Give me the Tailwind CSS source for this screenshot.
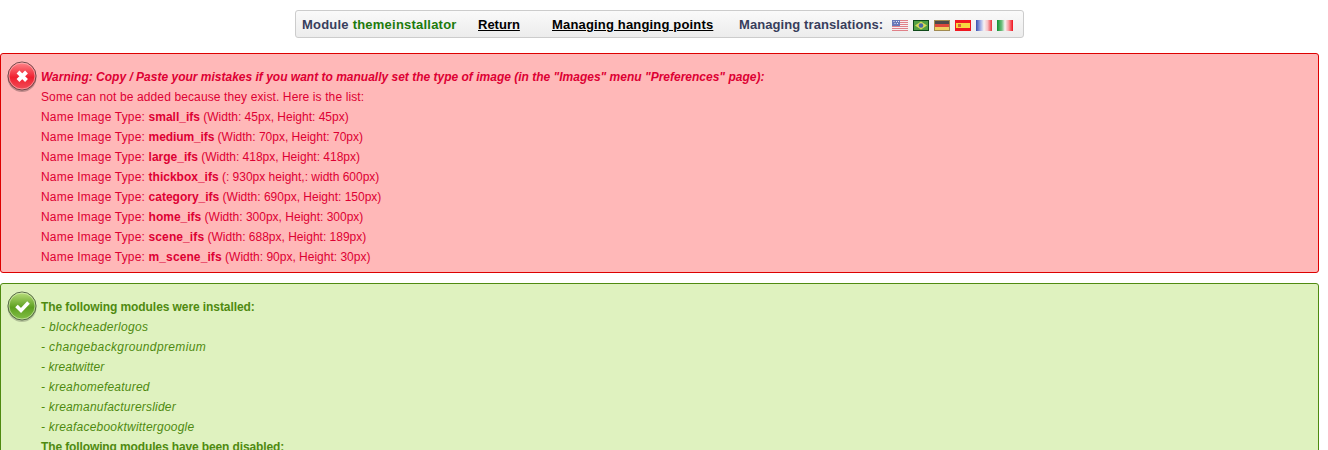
<!DOCTYPE html>
<html>
<head>
<meta charset="utf-8">
<script src="https://cdn.jsdelivr.net/npm/@tailwindcss/browser@4"></script>
</head>
<body class="bg-white">
<div class="h-[450px] w-[1328px] overflow-hidden font-['Liberation_Sans',Arial,sans-serif] text-[12px] leading-[20px]">
<div class="w-[1319px]">
  <div class="flex justify-center pt-[10px]">
    <div class="flex h-[28px] w-[729px] items-center rounded-[3px] border border-[#ccc] bg-gradient-to-b from-[#fafafa] to-[#ececec] pl-[6px] pt-[2px] text-[13px] font-bold text-[#383e5c]">
      <span class="w-[176px] tracking-[0.22px]">Module <span class="text-[#1c7a0c]">themeinstallator</span></span>
      <a class="w-[74px] text-black underline">Return</a>
      <a class="w-[187px] tracking-[0.17px] text-black underline">Managing hanging points</a>
      <span class="w-[153px] tracking-[0.09px]">Managing translations:</span>
      <span class="mt-[1px] flex gap-[5px]">
        <svg width="16" height="11" viewBox="0 0 16 11"><rect width="16" height="11" fill="#f6eef0"/><path d="M0 .5h16M0 2.5h16M0 4.5h16M0 6.5h16M0 8.5h16M0 10.5h16" stroke="#e08088"/><rect width="8" height="6" fill="#6a78b8"/><path d="M1.5 1.5h1M4 1.5h1M6 1.5h1M2.5 3.5h1M5 3.5h1" stroke="#e8e8f4"/></svg>
        <svg width="16" height="11" viewBox="0 0 16 11"><rect width="16" height="11" fill="#0f4a1a"/><rect x="1" y="1" width="14" height="9" fill="#52a044"/><path d="M8 1.5 14 5.5 8 9.5 2 5.5Z" fill="#d8d85a"/><circle cx="8" cy="5.5" r="2.3" fill="#4a6aa8"/></svg>
        <svg width="16" height="11" viewBox="0 0 16 11"><rect width="16" height="11" fill="#a08a50"/><rect x="1" y="1" width="14" height="3" fill="#4a4a4a"/><rect x="1" y="4" width="14" height="3" fill="#dc4a3c"/><rect x="1" y="7" width="14" height="3" fill="#f0d060"/></svg>
        <svg width="16" height="11" viewBox="0 0 16 11"><rect width="16" height="11" fill="#f01820"/><rect x="1" y="3" width="14" height="5" fill="#f8d840"/><rect x="3" y="4" width="3" height="3" fill="#d86a3c"/></svg>
        <svg width="16" height="11" viewBox="0 0 16 11"><defs><linearGradient id="fr"><stop offset="0" stop-color="#3a50b0"/><stop offset=".3" stop-color="#a8b4e8"/><stop offset=".5" stop-color="#f6f2f4"/><stop offset=".72" stop-color="#f8c0c4"/><stop offset="1" stop-color="#e83038"/></linearGradient></defs><rect width="16" height="11" fill="url(#fr)"/></svg>
        <svg width="16" height="11" viewBox="0 0 16 11"><defs><linearGradient id="it"><stop offset="0" stop-color="#109030"/><stop offset=".3" stop-color="#70c080"/><stop offset=".5" stop-color="#f8f6f6"/><stop offset=".72" stop-color="#f8a0a4"/><stop offset="1" stop-color="#f0101c"/></linearGradient></defs><rect width="16" height="11" fill="url(#it)"/></svg>
      </span>
    </div>
  </div>

  <div class="relative mt-[15px] h-[220px] rounded-[3px] border border-[#dd0000] bg-[#ffb8b8] pl-[40px] pt-[13px] text-[#dd0033]">
    <svg class="absolute left-[6px] top-[6px]" width="32" height="33" viewBox="0 0 32 33">
      <defs><linearGradient id="r" x1="0" y1="0" x2="0" y2="1"><stop offset="0" stop-color="#ff8a8e"/><stop offset=".55" stop-color="#f02030"/><stop offset="1" stop-color="#f0505a"/></linearGradient></defs>
      <ellipse cx="15" cy="17.5" rx="14.5" ry="14.5" fill="#000" fill-opacity=".25"/>
      <circle cx="15" cy="16" r="14" fill="url(#r)" stroke="#6b4a4c" stroke-width="1"/>
      <circle cx="15" cy="16" r="13" fill="none" stroke="#ffc8c8" stroke-opacity=".6" stroke-width="1"/>
      <path d="M11 12 19.5 20.5M19.5 12 11 20.5" stroke="#fff" stroke-width="4"/>
    </svg>
    <div class="font-bold italic">Warning: Copy / Paste your mistakes if you want to manually set the type of image (in the "Images" menu "Preferences" page):</div>
    <div class="tracking-[0.12px]">Some can not be added because they exist. Here is the list:</div>
    <div><span class="tracking-[0.18px]">Name Image Type: </span><b>small_ifs</b> (Width: 45px, Height: 45px)</div>
    <div><span class="tracking-[0.18px]">Name Image Type: </span><b class="tracking-[-0.1px]">medium_ifs</b> (Width: 70px, Height: 70px)</div>
    <div><span class="tracking-[0.18px]">Name Image Type: </span><b>large_ifs</b> (Width: 418px, Height: 418px)</div>
    <div><span class="tracking-[0.18px]">Name Image Type: </span><b>thickbox_ifs</b> (: 930px height,: width 600px)</div>
    <div><span class="tracking-[0.18px]">Name Image Type: </span><b>category_ifs</b> (Width: 690px, Height: 150px)</div>
    <div><span class="tracking-[0.18px]">Name Image Type: </span><b>home_ifs</b> (Width: 300px, Height: 300px)</div>
    <div><span class="tracking-[0.18px]">Name Image Type: </span><b class="tracking-[0.1px]">scene_ifs</b> (Width: 688px, Height: 189px)</div>
    <div><span class="tracking-[0.18px]">Name Image Type: </span><b class="tracking-[0.1px]">m_scene_ifs</b> (Width: 90px, Height: 30px)</div>
  </div>

  <div class="relative mt-[10px] rounded-[3px] border border-[#4f8a10] bg-[#dff2bf] pb-[20px] pl-[40px] pt-[13px] text-[#4f8a10]">
    <svg class="absolute left-[6px] top-[6px]" width="32" height="33" viewBox="0 0 32 33">
      <defs><linearGradient id="g" x1="0" y1="0" x2="0" y2="1"><stop offset="0" stop-color="#bce080"/><stop offset=".55" stop-color="#5ea020"/><stop offset="1" stop-color="#84c048"/></linearGradient></defs>
      <ellipse cx="15" cy="17.5" rx="14.5" ry="14.5" fill="#000" fill-opacity=".2"/>
      <circle cx="15" cy="16" r="14" fill="url(#g)" stroke="#55664a" stroke-width="1"/>
      <circle cx="15" cy="16" r="13" fill="none" stroke="#e4f4c8" stroke-opacity=".6" stroke-width="1"/>
      <path d="M9.5 16 14 20.5 21.5 12.5" fill="none" stroke="#fff" stroke-width="3.6"/>
    </svg>
    <div class="font-bold tracking-[-0.08px]">The following modules were installed:</div>
    <div class="italic tracking-[0.33px]">- blockheaderlogos</div>
    <div class="italic tracking-[0.36px]">- changebackgroundpremium</div>
    <div class="italic tracking-[0.04px]">- kreatwitter</div>
    <div class="italic tracking-[0.22px]">- kreahomefeatured</div>
    <div class="italic tracking-[0.2px]">- kreamanufacturerslider</div>
    <div class="italic tracking-[0.22px]">- kreafacebooktwittergoogle</div>
    <div class="font-bold tracking-[-0.12px]">The following modules have been disabled:</div>
  </div>
</div>
</div>
</body>
</html>
